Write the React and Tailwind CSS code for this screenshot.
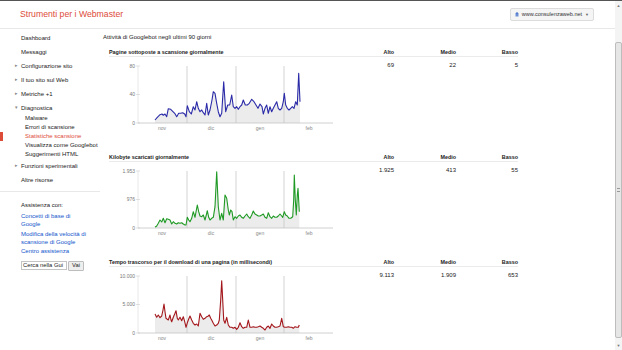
const pagine = [[165,240],[172,232],[180,224],[186,222],[190,226],[195,222],[200,230],[205,206],[212,208],[218,214],[224,220],[230,230],[236,220],[242,220],[248,218],[254,222],[258,230],[262,197],[268,215],[274,222],[280,200],[285,210],[290,185],[295,205],[300,215],[305,210],[310,218],[315,225],[320,190],[325,225],[330,210],[336,180],[340,155],[345,160],[350,190],[355,215],[360,230],[365,220],[371,125],[377,215],[383,195],[389,195],[395,165],[400,200],[405,205],[410,200],[415,208],[420,200],[425,195],[430,180],[436,195],[442,195],[448,190],[455,178],[462,185],[468,195],[474,205],[480,192],[486,200],[490,222],[495,205],[500,195],[505,220],[510,200],[515,215],[520,205],[525,195],[530,185],[535,205],[540,210],[545,205],[550,185],[553,160],[557,195],[562,205],[567,210],[572,205],[577,200],[582,205],[587,185],[592,195],[596,100],[600,185]];

const kilobyte = [[165,262],[170,258],[175,250],[180,240],[185,246],[190,235],[195,248],[200,236],[205,238],[210,240],[215,252],[220,245],[225,250],[230,252],[235,248],[240,250],[245,248],[250,252],[255,255],[258,255],[262,232],[266,240],[270,245],[275,235],[280,215],[285,232],[292,195],[296,215],[300,228],[305,230],[310,225],[315,240],[320,220],[322,212],[326,232],[330,240],[335,235],[340,232],[345,200],[350,95],[355,200],[360,240],[365,220],[370,240],[375,165],[380,175],[385,210],[388,225],[392,210],[396,215],[400,240],[405,230],[410,235],[415,228],[420,225],[425,232],[430,235],[435,228],[440,222],[445,230],[450,235],[455,225],[460,213],[465,222],[470,225],[475,228],[480,228],[485,225],[490,222],[495,232],[500,235],[505,218],[510,230],[515,235],[520,228],[525,232],[530,232],[535,228],[540,222],[545,228],[548,232],[553,215],[557,225],[562,228],[567,235],[572,235],[578,230],[581,180],[583,105],[586,180],[589,225],[592,165],[594,145],[598,215]];

const tempo = [[165,222],[170,232],[175,225],[180,233],[185,228],[189,210],[192,192],[195,215],[198,235],[202,238],[205,240],[210,225],[213,240],[215,245],[220,232],[225,220],[228,212],[232,235],[235,240],[240,232],[245,242],[250,230],[254,245],[258,262],[263,245],[267,235],[270,228],[275,240],[280,250],[285,255],[290,252],[295,258],[300,220],[305,230],[310,238],[315,235],[320,230],[325,228],[328,225],[332,235],[335,240],[340,250],[345,258],[350,255],[355,250],[358,240],[362,180],[365,122],[368,180],[371,240],[375,250],[380,232],[385,255],[390,262],[395,262],[400,265],[405,262],[410,268],[415,262],[420,248],[425,260],[430,265],[435,262],[440,262],[445,240],[450,262],[455,262],[460,260],[465,262],[470,262],[475,260],[480,258],[485,262],[490,265],[495,270],[500,262],[505,258],[510,265],[515,252],[520,258],[525,262],[530,262],[535,260],[540,258],[545,235],[550,260],[555,262],[560,262],[565,260],[570,262],[575,262],[580,265],[585,260],[590,262],[595,262],[598,255]];

const sections = [
  { title: "Pagine sottoposte a scansione giornalmente", data: pagine, shift: 17, color: "#2a2aa8", labels: ["80", "40", "0"], values: ["69", "22", "5"] },
  { title: "Kilobyte scaricati giornalmente", data: kilobyte, shift: 22, color: "#1f9a24", labels: ["1.953", "976", "0"], values: ["1.925", "413", "55"] },
  { title: "Tempo trascorso per il download di una pagina (in millisecondi)", data: tempo, shift: 27, color: "#a3161b", labels: ["10.000", "5.000", "0"], values: ["9.113", "1.909", "653"] },
];

function Chart({ data, shift, color, labels }) {
  const pts = data.map(([zx, zy]) => [zx / 3 - 9, zy / 3 - shift]);
  const line = pts.map(([x, y]) => `${x.toFixed(1)},${y.toFixed(1)}`).join(" ");
  const area = `M${pts[0][0].toFixed(1)},66 L${line.replace(/ /g, " L")} L${pts[pts.length - 1][0].toFixed(1)},66 Z`;
  const ys = [9, 37.5, 66];
  return (
    <svg width="226" height="80" className="block overflow-visible">
      <line x1="29" x2="29" y1="9" y2="66" stroke="#e2e2e2" strokeWidth="0.8" />
      {ys.map((y) => (
        <line key={y} x1="27" x2="31" y1={y} y2={y} stroke="#cfcfcf" strokeWidth="0.6" />
      ))}
      {labels.map((l, i) => (
        <text key={l} x="26" y={ys[i] + 1.8} textAnchor="end" fontSize="5" fill="#777" fontFamily="Liberation Sans, Arial, sans-serif">
          {l}
        </text>
      ))}
      <path d={area} fill="#ececec" />
      {[78, 127, 175].map((x) => (
        <line key={x} x1={x} x2={x} y1="9" y2="66" stroke="#c8c8c8" strokeWidth="0.8" />
      ))}
      <polyline points={line} fill="none" stroke={color} strokeWidth="1.1" strokeLinejoin="round" />
      <line x1="29" x2="224" y1="66" y2="66" stroke="#c4c4c4" strokeWidth="0.8" />
      {["nov", "dic", "gen", "feb"].map((m, i) => (
        <text key={m} x={53 + i * 49} y="73" textAnchor="middle" fontSize="5" fill="#888" fontFamily="Liberation Sans, Arial, sans-serif">
          {m}
        </text>
      ))}
    </svg>
  );
}

function NavItem({ label, arrow }) {
  return (
    <div className="flex h-[14px] items-center pl-[15px]">
      <span className="w-[6px] text-[5px] text-[#888]">{arrow}</span>
      <span>{label}</span>
    </div>
  );
}

function SubItem({ label, active }) {
  return (
    <div
      className={`flex h-[9px] items-center ${
        active ? "border-l-[3px] border-[#dd4b39] pl-[22px] text-[#dd4b39]" : "pl-[25px]"
      }`}
    >
      {label}
    </div>
  );
}

export default function App() {
  return (
    <div className="flex h-[350px] w-[622px] flex-col overflow-hidden bg-white font-['Liberation_Sans',Arial,sans-serif] text-[#222]">
      <div className="h-px shrink-0 bg-[#555]" />
      <div className="flex min-h-0 flex-1">
        <div className="flex min-w-0 flex-1 flex-col overflow-hidden">
          {/* header */}
          <div className="flex h-[28px] shrink-0 items-center justify-between border-b border-[#e8e8e8] pl-[20px] pr-[21px]">
            <span className="text-[8.7px] text-[#dd4b39]">Strumenti per i Webmaster</span>
            <div className="flex h-[13px] items-center gap-[3px] rounded-[2px] border border-[#dcdcdc] bg-[#f5f5f5] px-[4px] text-[5.5px] text-[#333]">
              <svg width="4" height="5" viewBox="0 0 4 5">
                <rect x="0.5" y="1" width="3" height="3.5" fill="#6b8fd6" />
                <rect x="1.5" y="0" width="1" height="2" fill="#3b64c0" />
              </svg>
              <span>www.consulenzaweb.net</span>
              <span className="text-[4px] text-[#666]">▼</span>
            </div>
          </div>

          <div className="flex shrink-0">
            {/* sidebar */}
            <aside className="w-[103px] shrink-0 pt-[2px] text-[6px]">
              <NavItem label="Dashboard" />
              <NavItem label="Messaggi" />
              <NavItem label="Configurazione sito" arrow="▸" />
              <NavItem label="Il tuo sito sul Web" arrow="▸" />
              <NavItem label="Metriche +1" arrow="▸" />
              <NavItem label="Diagnostica" arrow="▾" />
              <div className="-mt-px">
                <SubItem label="Malware" />
                <SubItem label="Errori di scansione" />
                <SubItem label="Statistiche scansione" active />
                <SubItem label="Visualizza come Googlebot" />
                <SubItem label="Suggerimenti HTML" />
              </div>
              <NavItem label="Funzioni sperimentali" arrow="▸" />
              <NavItem label="Altre risorse" />
              <div className="mt-[4px] w-[100px] border-b border-[#e8e8e8]" />
              <div className="pl-[21px] pt-[10px] leading-[7.5px]">
                <p>Assistenza con:</p>
                <div className="mt-[3.5px] text-[#1155cc]">
                  <p className="w-[64px]">Concetti di base di Google</p>
                  <p className="mt-[3px] w-[70px]">Modifica della velocità di scansione di Google</p>
                  <p className="mt-[2px]">Centro assistenza</p>
                </div>
                <div className="mt-[5px] flex items-center">
                  <div className="flex h-[9px] w-[46px] items-center whitespace-nowrap border border-[#c4c4c4] px-[1px] text-[5.8px]">
                    Cerca nella Gui
                  </div>
                  <div className="ml-[1px] flex h-[10px] w-[16px] items-center justify-center rounded-[1px] border border-[#bdbdbd] bg-[#eee] text-[5.8px]">
                    Vai
                  </div>
                </div>
              </div>
            </aside>

            {/* main */}
            <main className="flex-1 pt-[4px]">
              <h1 className="mb-[7px] h-[8px] text-[6px] leading-[8px]">Attività di Googlebot negli ultimi 90 giorni</h1>
              {sections.map((s) => (
                <div key={s.title} className="mb-[16px] ml-[6px]">
                  <div className="flex h-[9px] w-[409px] items-center border-b border-[#ebebeb] text-[5.4px] font-bold">
                    <div className="w-[223px]">{s.title}</div>
                    <div className="w-[62px] text-right">Alto</div>
                    <div className="w-[62px] text-right">Medio</div>
                    <div className="w-[62px] text-right">Basso</div>
                  </div>
                  <div className="flex text-[6px] leading-[8px]">
                    <div className="h-[80px] w-[223px]">
                      <Chart data={s.data} shift={s.shift} color={s.color} labels={s.labels} />
                    </div>
                    {s.values.map((v, i) => (
                      <div key={i} className="w-[62px] pt-[4px] text-right">
                        {v}
                      </div>
                    ))}
                  </div>
                </div>
              ))}
            </main>
          </div>
        </div>

        {/* scrollbar */}
        <div className="flex w-[7px] shrink-0 flex-col bg-[#f4f4f4]">
          <div className="flex h-[9px] shrink-0 items-center justify-center text-[4px] text-[#777]">▲</div>
          <div className="mt-[32px] flex h-[296px] shrink-0 items-center justify-center rounded-[2px] border border-[#bdbdbd] bg-[#e6e6e6]">
            <div className="h-[4px] w-[3px] border-y border-[#999]" />
          </div>
          <div className="flex-1" />
          <div className="flex h-[8px] shrink-0 items-center justify-center text-[4px] text-[#777]">▼</div>
        </div>
      </div>
    </div>
  );
}
